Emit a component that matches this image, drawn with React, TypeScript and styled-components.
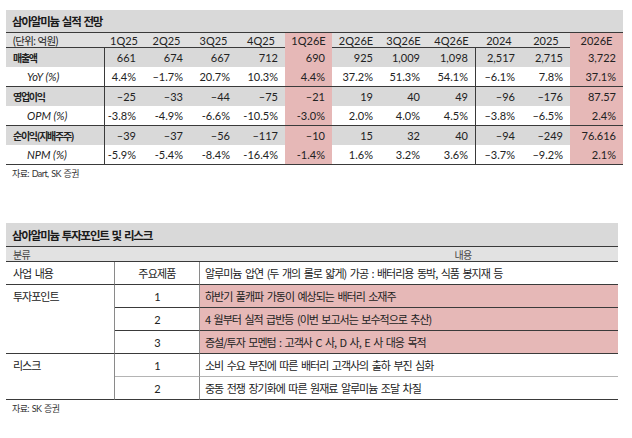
import React from 'react';
import styled, { createGlobalStyle } from 'styled-components';

const KR = `"Noto Sans CJK KR", sans-serif`;
const NUM = `"Lato", "Noto Sans CJK KR", sans-serif`;
const LINE = '#3a3a3a';
const PINK = '#e6b8b7';

const GlobalStyle = createGlobalStyle`
  html, body { margin: 0; padding: 0; background: #ffffff; }
  body { font-family: ${KR}; color: #222; }
`;

const Page = styled.div`
  width: 632px;
  height: 438px;
  box-sizing: border-box;
  padding: 10px 0 0 6px;
  display: flex;
  flex-direction: column;
  overflow: hidden;
`;

const Section = styled.section<{ $w: number; $gap?: number }>`
  width: ${(p) => p.$w}px;
  display: flex;
  flex-direction: column;
  margin-top: ${(p) => p.$gap ?? 0}px;
`;

const Title = styled.div<{ $h: number }>`
  height: ${(p) => p.$h}px;
  box-sizing: border-box;
  background: #d9d9d9;
  border-bottom: 1px solid ${LINE};
  padding-left: 6px;
  display: flex;
  align-items: center;
  font-family: ${KR};
  font-weight: 700;
  font-size: 11.5px;
  letter-spacing: -1.2px;
  word-spacing: 1.5px;
  color: #1a1a1a;
`;

const Source = styled.div`
  height: 12px;
  margin-top: 3px;
  padding-left: 6px;
  font-family: ${NUM};
  font-size: 9px;
  line-height: 12px;
  letter-spacing: -0.6px;
  word-spacing: 1px;
  color: #333;
`;

/* ---------- Table 1 ---------- */
const COLS1 = '99px 38px 47px 47px 48px 47px 48px 47px 49px 46px 48px 53px';

const FinRow = styled.div<{ $h: number; $bg: string; $line?: boolean }>`
  display: grid;
  grid-template-columns: ${COLS1};
  height: ${(p) => p.$h}px;
  box-sizing: border-box;
  background: ${(p) => p.$bg};
  border-bottom: ${(p) => (p.$line ? `1px solid ${LINE}` : 'none')};
`;

const FinCell = styled.div<{ $pink?: boolean; $divider?: boolean; $align: 'left' | 'right' | 'center' }>`
  box-sizing: border-box;
  display: flex;
  align-items: center;
  justify-content: ${(p) => (p.$align === 'left' ? 'flex-start' : p.$align === 'right' ? 'flex-end' : 'center')};
  padding: 0 ${(p) => (p.$align === 'right' ? 7 : 0)}px 0 0;
  background: ${(p) => (p.$pink ? PINK : 'transparent')};
  border-right: ${(p) => (p.$divider ? `1px solid ${LINE}` : 'none')};
  font-family: ${NUM};
  font-size: 11px;
  color: #222;
  white-space: nowrap;
`;

const Label = styled.div<{ $kind: 'bold' | 'italic' | 'unit' }>`
  box-sizing: border-box;
  display: flex;
  align-items: center;
  border-right: ${(p) => (p.$kind === 'unit' ? 'none' : `1px solid ${LINE}`)};
  padding-left: ${(p) => (p.$kind === 'italic' ? 21 : 7)}px;
  font-family: ${(p) => (p.$kind === 'bold' ? KR : NUM)};
  font-weight: ${(p) => (p.$kind === 'bold' ? 700 : 400)};
  font-style: ${(p) => (p.$kind === 'italic' ? 'italic' : 'normal')};
  font-size: ${(p) => (p.$kind === 'bold' ? 10 : p.$kind === 'unit' ? 10.5 : 11)}px;
  letter-spacing: ${(p) => (p.$kind === 'bold' ? -1.3 : p.$kind === 'unit' ? -0.6 : 0)}px;
  color: #222;
  white-space: nowrap;
`;

const headers = ['1Q25', '2Q25', '3Q25', '4Q25', '1Q26E', '2Q26E', '3Q26E', '4Q26E', '2024', '2025', '2026E'];
const PINK_COLS = [4, 10];
const DIVIDER_COL = 7;

type FinData = { label: string; kind: 'bold' | 'italic'; values: string[]; line?: boolean };

const finRows: FinData[] = [
  { label: '매출액', kind: 'bold', values: ['661', '674', '667', '712', '690', '925', '1,009', '1,098', '2,517', '2,715', '3,722'] },
  { label: 'YoY (%)', kind: 'italic', line: true, values: ['4.4%', '–1.7%', '20.7%', '10.3%', '4.4%', '37.2%', '51.3%', '54.1%', '–6.1%', '7.8%', '37.1%'] },
  { label: '영업이익', kind: 'bold', values: ['–25', '–33', '–44', '–75', '–21', '19', '40', '49', '–96', '–176', '87.57'] },
  { label: 'OPM (%)', kind: 'italic', line: true, values: ['-3.8%', '-4.9%', '-6.6%', '-10.5%', '-3.0%', '2.0%', '4.0%', '4.5%', '–3.8%', '–6.5%', '2.4%'] },
  { label: '순이익(지배주주)', kind: 'bold', values: ['–39', '–37', '–56', '–117', '–10', '15', '32', '40', '–94', '–249', '76.616'] },
  { label: 'NPM (%)', kind: 'italic', line: true, values: ['-5.9%', '-5.4%', '-8.4%', '-16.4%', '-1.4%', '1.6%', '3.2%', '3.6%', '–3.7%', '–9.2%', '2.1%'] },
];

/* ---------- Table 2 ---------- */
const COLS2 = '109px 85px 418px';

const RiskGrid = styled.div`
  display: grid;
  grid-template-columns: ${COLS2};
  grid-template-rows: 15px repeat(6, 23px);
`;

const HeadCell = styled.div<{ $center?: boolean }>`
  box-sizing: border-box;
  background: #e2e2e2;
  border-bottom: 1px solid ${LINE};
  display: flex;
  align-items: center;
  justify-content: ${(p) => (p.$center ? 'center' : 'flex-start')};
  padding-left: ${(p) => (p.$center ? 108 : 7)}px;
  font-family: ${KR};
  font-size: 10px;
  letter-spacing: -0.8px;
  color: #444;
`;

const GroupLabel = styled.div<{ $span: number }>`
  grid-row: span ${(p) => p.$span};
  box-sizing: border-box;
  border-bottom: 1px solid ${LINE};
  border-right: 1px solid #8a8a8a;
  padding-left: 7px;
  line-height: 22px;
  font-family: ${KR};
  font-size: 11px;
  letter-spacing: -1px;
  word-spacing: 2px;
  color: #222;
`;

const NumCell = styled.div<{ $soft?: boolean }>`
  box-sizing: border-box;
  border-bottom: 1px solid ${(p) => (p.$soft ? '#b4b4b4' : LINE)};
  border-right: 1px solid #8a8a8a;
  display: flex;
  align-items: center;
  justify-content: center;
  font-family: ${NUM};
  font-size: 11px;
  letter-spacing: -0.8px;
  color: #222;
`;

const TextCell = styled.div<{ $pink?: boolean; $soft?: boolean }>`
  box-sizing: border-box;
  border-bottom: 1px solid ${(p) => (p.$soft ? '#b4b4b4' : LINE)};
  background: ${(p) => (p.$pink ? PINK : 'transparent')};
  display: flex;
  align-items: center;
  padding-left: 5px;
  font-family: ${KR};
  font-size: 11px;
  letter-spacing: -1px;
  word-spacing: 2px;
  color: #222;
  white-space: pre;
`;

export default function App() {
  return (
    <>
      <GlobalStyle />
      <Page>
        <Section $w={617}>
          <Title $h={23}>삼아알미늄 실적 전망</Title>
          <FinRow $h={15} $bg="#e0e0e0" $line>
            <Label $kind="unit">(단위: 억원)</Label>
            {headers.map((h, i) => (
              <FinCell key={h} $align="center" $pink={PINK_COLS.includes(i)}>
                {h}
              </FinCell>
            ))}
          </FinRow>
          {finRows.map((r) => (
            <FinRow key={r.label} $h={r.line ? 20 : 19} $bg={r.kind === 'bold' ? '#d9d9d9' : '#ffffff'} $line={r.line}>
              <Label $kind={r.kind}>{r.label}</Label>
              {r.values.map((v, i) => (
                <FinCell key={i} $align="right" $pink={PINK_COLS.includes(i)} $divider={i === DIVIDER_COL}>
                  {v}
                </FinCell>
              ))}
            </FinRow>
          ))}
          <Source>자료: Dart, SK 증권</Source>
        </Section>

        <Section $w={612} $gap={43}>
          <Title $h={24}>삼아알미늄 투자포인트 및 리스크</Title>
          <RiskGrid>
            <HeadCell>분류</HeadCell>
            <HeadCell />
            <HeadCell $center>내용</HeadCell>

            <GroupLabel $span={1}>사업 내용</GroupLabel>
            <NumCell>주요제품</NumCell>
            <TextCell>알루미늄 압연 (두 개의 롤로 얇게) 가공 : 배터리용 동박, 식품 봉지재 등</TextCell>

            <GroupLabel $span={3}>투자포인트</GroupLabel>
            <NumCell>1</NumCell>
            <TextCell $pink>하반기 풀캐파 가동이 예상되는 배터리 소재주</TextCell>
            <NumCell>2</NumCell>
            <TextCell $pink>4 월부터 실적 급반등 (이번 보고서는 보수적으로 추산)</TextCell>
            <NumCell>3</NumCell>
            <TextCell $pink>증설/투자 모멘텀 : 고객사 C 사, D 사, E 사 대응 목적</TextCell>

            <GroupLabel $span={2}>리스크</GroupLabel>
            <NumCell $soft>1</NumCell>
            <TextCell $soft>소비 수요 부진에 따른 배터리 고객사의 출하 부진 심화</TextCell>
            <NumCell>2</NumCell>
            <TextCell>중동 전쟁 장기화에 따른 원재료 알루미늄 조달 차질</TextCell>
          </RiskGrid>
          <Source>자료: SK 증권</Source>
        </Section>
      </Page>
    </>
  );
}
